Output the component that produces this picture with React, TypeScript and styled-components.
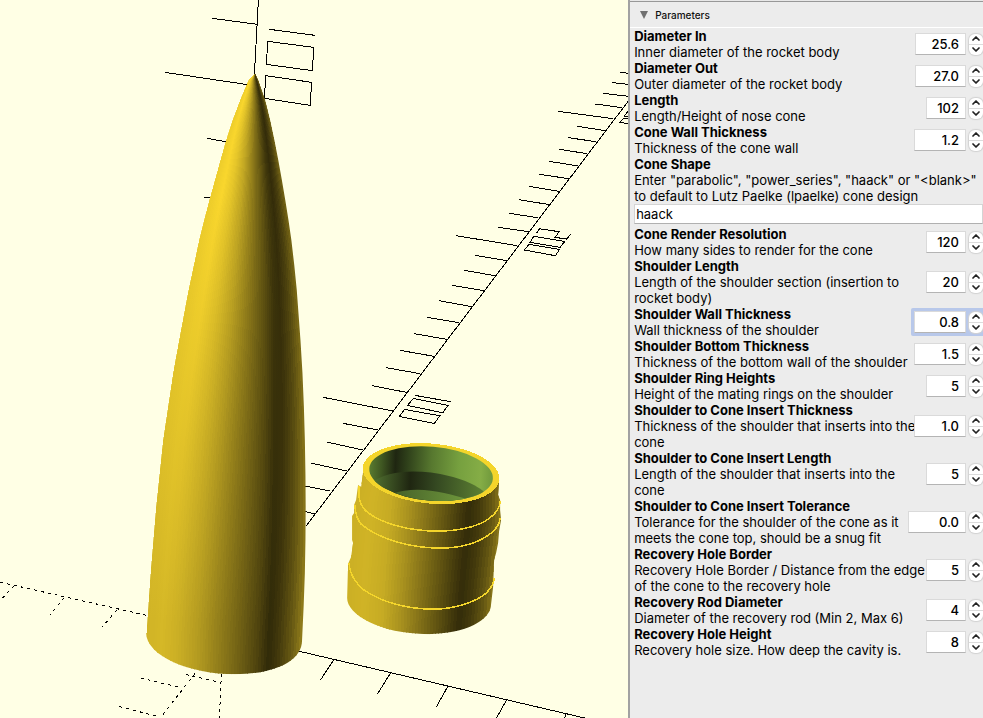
import React from 'react';
import styled, { createGlobalStyle } from 'styled-components';

const GlobalStyle = createGlobalStyle`
  * { box-sizing: border-box; }
  body { margin: 0; background: #ffffe5; color: #000; font-family: Inter, "Liberation Sans", sans-serif; }
`;

const Window = styled.main`
  display: flex;
  min-height: 100vh;
  overflow: hidden;
`;

const Viewport = styled.section`
  flex: 1;
  min-width: 0;
  background: #ffffe5;
  display: flex;
`;

const Scene = styled.svg`
  display: block;
  width: 100%;
  height: 100vh;
`;

const AxisLines = styled.g`
  fill: none;
  stroke: #000;
  stroke-width: 1px;
  shape-rendering: crispEdges;
  path { vector-effect: non-scaling-stroke; }
`;

const DashedLines = styled(AxisLines)`
  stroke-dasharray: 3 4;
`;

const Panel = styled.aside`
  width: calc(36% + 1px);
  flex: none;
  overflow: hidden;
  background: #ececec;
  border-left: 2px solid #a2a2a2;
  box-shadow: inset 0 1px #e8e8e8, inset 0 2px #989898;
`;

const Header = styled.button`
  display: flex;
  align-items: center;
  gap: 6px;
  width: 100%;
  height: 28px;
  padding: 3px 0 0 9px;
  border: 0;
  border-bottom: 1px solid #fff;
  background: transparent;
  color: #111;
  font: 500 10px/14px Inter, sans-serif;
  text-align: left;
`;

const Fields = styled.form`
  padding-left: 4px;
`;

const Row = styled.div`
  display: flex;
  align-items: center;
  justify-content: space-between;
`;

const Caption = styled.label`
  display: block;
  min-width: 0;
  font-size: 13px;
  line-height: 16px;
  white-space: nowrap;
`;

const Title = styled.strong`
  display: block;
  font-weight: 700;
`;

const Line = styled.span`
  display: block;
`;

const Spin = styled.div<{ $active?: boolean }>`
  display: flex;
  flex: none;
  align-items: center;
  gap: 3px;
  padding: 3px 0 3px 3px;
  margin: -2px 0;
  border-radius: 2px 0 0 2px;
  background: ${p => (p.$active ? '#b8c8ea' : 'transparent')};
`;

const Value = styled.input<{ $width: number }>`
  width: ${p => p.$width}px;
  height: 22px;
  padding: 0 6px 0 0;
  border: 1px solid #dadada;
  border-bottom-color: #b4b4b4;
  background: #fff;
  color: #000;
  text-align: right;
  font: 500 13px/18px Inter, sans-serif;
  outline: 0;
`;

const Stepper = styled.div`
  display: flex;
  flex-direction: column;
  width: 14px;
  height: 21px;
  border-radius: 6px;
  background: #fff;
  box-shadow: 0 0 1px 1px #d2d2d2;
`;

const Step = styled.button`
  display: flex;
  flex: 1;
  align-items: center;
  justify-content: center;
  padding: 0;
  border: 0;
  background: transparent;
  & + & { border-top: 1px solid #dcdcdc; }
`;

const TextValue = styled.input`
  display: block;
  width: 100%;
  height: 20px;
  margin-bottom: 2px;
  padding: 0 1px;
  border: 1px solid #d4d4d4;
  border-bottom-color: #b0b0b0;
  background: #fff;
  color: #000;
  font: 400 13px/16px Inter, sans-serif;
  outline: 0;
`;

type Param = { title: string; lines: string[]; value: string; width?: number; active?: boolean };

const before: Param[] = [
  { title: 'Diameter In', lines: ['Inner diameter of the rocket body'], value: '25.6', width: 51 },
  { title: 'Diameter Out', lines: ['Outer diameter of the rocket body'], value: '27.0', width: 51 },
  { title: 'Length', lines: ['Length/Height of nose cone'], value: '102', width: 40 },
  { title: 'Cone Wall Thickness', lines: ['Thickness of the cone wall'], value: '1.2', width: 52 },
];

const after: Param[] = [
  { title: 'Cone Render Resolution', lines: ['How many sides to render for the cone'], value: '120', width: 40 },
  { title: 'Shoulder Length', lines: ['Length of the shoulder section (insertion to', 'rocket body)'], value: '20', width: 40 },
  { title: 'Shoulder Wall Thickness', lines: ['Wall thickness of the shoulder'], value: '0.8', width: 52, active: true },
  { title: 'Shoulder Bottom Thickness', lines: ['Thickness of the bottom wall of the shoulder'], value: '1.5', width: 52 },
  { title: 'Shoulder Ring Heights', lines: ['Height of the mating rings on the shoulder'], value: '5', width: 40 },
  { title: 'Shoulder to Cone Insert Thickness', lines: ['Thickness of the shoulder that inserts into the', 'cone'], value: '1.0', width: 52 },
  { title: 'Shoulder to Cone Insert Length', lines: ['Length of the shoulder that inserts into the', 'cone'], value: '5', width: 40 },
  { title: 'Shoulder to Cone Insert Tolerance', lines: ['Tolerance for the shoulder of the cone as it', 'meets the cone top, should be a snug fit'], value: '0.0', width: 58 },
  { title: 'Recovery Hole Border', lines: ['Recovery Hole Border / Distance from the edge', 'of the cone to the recovery hole'], value: '5', width: 40 },
  { title: 'Recovery Rod Diameter', lines: ['Diameter of the recovery rod (Min 2, Max 6)'], value: '4', width: 40 },
  { title: 'Recovery Hole Height', lines: ['Recovery hole size. How deep the cavity is.'], value: '8', width: 40 },
];

const Chevron = ({ up }: { up?: boolean }) => (
  <svg width="8" height="5" viewBox="0 0 8 5" fill="none" stroke="#222" strokeWidth="1.7" strokeLinecap="round" strokeLinejoin="round" aria-hidden="true">
    <path d={up ? 'M1 4 4 1 7 4' : 'M1 1 4 4 7 1'} />
  </svg>
);

function NumberField({ title, lines, value, width = 40, active }: Param) {
  const id = title.toLowerCase().replace(/ /g, '-');
  return (
    <Row>
      <Caption htmlFor={id}>
        <Title>{title}</Title>
        {lines.map(line => <Line key={line}>{line}</Line>)}
      </Caption>
      <Spin $active={active}>
        <Value id={id} type="text" inputMode="decimal" defaultValue={value} $width={width} />
        <Stepper>
          <Step type="button" aria-label={`Increase ${title}`}><Chevron up /></Step>
          <Step type="button" aria-label={`Decrease ${title}`}><Chevron /></Step>
        </Stepper>
      </Spin>
    </Row>
  );
}

type Stops = [number, number][];

function sample(stops: Stops, at: number) {
  if (at <= stops[0][0]) return stops[0][1];
  for (let i = 1; i < stops.length; i++) {
    const [x1, y1] = stops[i];
    const [x0, y0] = stops[i - 1];
    if (at <= x1) return y0 + ((y1 - y0) * (at - x0)) / (x1 - x0);
  }
  return stops[stops.length - 1][1];
}

const gold = (k: number) => `rgb(${Math.round(254 * k)},${Math.round(219 * k)},${Math.round(46 * k)})`;

const coneLeft: Stops = [[74, 254], [80, 248.5], [100, 240], [120, 232.5], [140, 226], [160, 220.3], [180, 214.8], [200, 209.2], [220, 204], [240, 199], [292, 188], [340, 179], [373, 173], [440, 163], [507, 156], [573, 150.5], [632, 146.5], [680, 146]];
const coneRight: Stops = [[74, 255], [80, 258], [100, 265], [120, 270], [140, 274.3], [160, 278.2], [180, 281.8], [200, 285.2], [220, 288.4], [240, 291.3], [265, 294.2], [290, 296.7], [340, 300.4], [373, 302.4], [406, 303.8], [440, 304.8], [475, 305.4], [507, 305.6], [540, 305.4], [573, 304.8], [606, 303.6], [640, 302], [680, 300]];
const coneTop: Stops = [[0, 0.93], [0.15, 0.98], [0.28, 0.9], [0.42, 0.76], [0.55, 0.58], [0.68, 0.4], [0.78, 0.25], [0.84, 0.2], [0.91, 0.28], [1, 0.46]];
const coneBase: Stops = [[0, 0.82], [0.1, 0.84], [0.2, 0.8], [0.34, 0.7], [0.46, 0.58], [0.6, 0.44], [0.72, 0.3], [0.79, 0.19], [0.85, 0.26], [0.93, 0.4], [1, 0.58]];

const bodyLeft: Stops = [[440, 362], [475, 361], [485, 357], [505, 353], [560, 348], [600, 346], [640, 345]];
const bodyRight: Stops = [[440, 501], [520, 501], [600, 493], [640, 490]];
const bodyTone: Stops = [[0, 0.8], [0.12, 0.82], [0.25, 0.78], [0.38, 0.66], [0.52, 0.5], [0.65, 0.35], [0.78, 0.2], [0.86, 0.27], [0.94, 0.4], [1, 0.56]];

type FacetProps = { id: string; left: Stops; right: Stops; top: Stops; base: Stops; from: number; to: number; count: number; step: number };

function Facets({ id, left, right, top, base, from, to, count, step }: FacetProps) {
  const rows: number[] = [];
  for (let y = from; y <= to; y += step) rows.push(y);
  const x = (y: number, t: number) => sample(left, y) + (sample(right, y) - sample(left, y)) * t;
  const strips = Array.from({ length: count }, (_, i) => i);
  return (
    <>
      <defs>
        {strips.map(i => (
          <linearGradient key={i} id={`${id}-${i}`} gradientUnits="userSpaceOnUse" x1="0" x2="0" y1={from} y2={to}>
            <stop offset="0.2" stopColor={gold(sample(top, (i + 0.5) / count))} />
            <stop offset="0.9" stopColor={gold(sample(base, (i + 0.5) / count))} />
          </linearGradient>
        ))}
      </defs>
      {strips.map(i => {
        const a = rows.map(y => `${x(y, i / count).toFixed(1)} ${y}`);
        const b = rows.map(y => `${(x(y, (i + 1) / count) + 0.6).toFixed(1)} ${y}`).reverse();
        return <path key={i} d={`M${a.join('L')}L${b.join('L')}Z`} fill={`url(#${id}-${i})`} />;
      })}
    </>
  );
}

const conePoints = [
  ...coneLeft.slice(0, -1).map(([y, x]) => `${x} ${y}`).reverse(),
  ...coneRight.slice(0, -1).map(([y, x]) => `${x} ${y}`),
];
const coneOutline = `M${conePoints.join('L')}C302 662 272 674 235 674C190 674 146 656 146 632Z`;

const bodyOutline = 'M363 472L361 487L358 485L356 500L354 505L354 513L352 516L352 540L353 543L351 557L348 564L347 598C347 614 379 634 428 634C466 634 491 620 491 604L493 587L494 560L496 553L498 543L499 531L501 520L500 510L500 500L498 495L499 480Z';

function ModelScene() {
  return (
    <Scene viewBox="0 0 628 718" preserveAspectRatio="xMinYMin slice" role="img" aria-label="Nose cone and shoulder model">
      <defs>
        <clipPath id="cone-clip"><path d={coneOutline} /></clipPath>
        <clipPath id="body-clip"><path d={bodyOutline} /></clipPath>
        <clipPath id="bore-clip"><ellipse cx="431" cy="473.5" rx="62" ry="27" transform="rotate(5 431 473.5)" /></clipPath>
        <linearGradient id="bore" gradientUnits="userSpaceOnUse" x1="369" x2="493" y1="470" y2="476">
          <stop offset="0" stopColor="#5a7c30" /><stop offset="0.1" stopColor="#3f5722" />
          <stop offset="0.21" stopColor="#1f2611" /><stop offset="0.3" stopColor="#2e3f1a" />
          <stop offset="0.5" stopColor="#57782f" /><stop offset="0.72" stopColor="#76a03f" />
          <stop offset="0.9" stopColor="#85ad46" /><stop offset="1" stopColor="#6f983c" />
        </linearGradient>
        <linearGradient id="bore-step" gradientUnits="userSpaceOnUse" x1="374" x2="486" y1="485" y2="490">
          <stop offset="0" stopColor="#507030" /><stop offset="0.32" stopColor="#1f2611" />
          <stop offset="0.55" stopColor="#344821" /><stop offset="1" stopColor="#5f8434" />
        </linearGradient>
        <linearGradient id="bore-floor" gradientUnits="userSpaceOnUse" x1="395" x2="470" y1="495" y2="500">
          <stop offset="0" stopColor="#476229" /><stop offset="1" stopColor="#719b3d" />
        </linearGradient>
      </defs>

      <AxisLines>
        <path d="M306 526L629 100" />
        <g transform="translate(500 50) scale(.33333)">
          <path d="M360 67L386 70M337 98L386 103M310 130L386 139M286 162L367 173M175 184L340 206M232 229L316 242M205 263L288 275M178 298L262 311M148 334L234 348M118 373L207 386M88 409L178 424M58 449L149 464M28 490L114 503" />
          <path d="M109 550L118 536L177 545L165 562L200 567L212 552M101 559L194 574L180 592L90 577ZM86 583L178 598L166 617L73 600ZM386 221L360 217L370 205L386 207M386 200L373 198L386 180" />
        </g>
        <g transform="translate(300 220) scale(.33333)">
          <path d="M595 22L686 35M469 47L652 77M526 106L620 122M493 151L586 167M457 196L553 212M418 242L516 260M382 292L478 308M343 341L442 358M301 391L403 409M259 443L361 461M217 497L320 517M70 532L280 573M130 610L235 630" />
          <path d="M345 526L453 545M340 535L444 556L428 578L322 556ZM313 568L419 587L403 610L298 589Z" />
        </g>
        <path d="M327 442L363 450M311 463L347 471M300 485L330 491M300 510L315 514" />
        <g transform="translate(140 0) scale(.33333)">
          <path d="M355 0L343 225M217 55L352 73M75 217L330 255M202 415L262 426M193 592H215M388 88L525 106M383 124L521 142L517 212L379 193ZM377 227L515 247L510 316L373 295Z" />
        </g>
        <path d="M290 649L585 718" />
        <g transform="translate(300 600) scale(.33333)">
          <path d="M101 179L61 240M271 219L232 282M443 259L409 320M619 300L589 354M798 341L794 354" />
        </g>
      </AxisLines>
      <DashedLines>
        <g transform="translate(0 560) scale(.33333)">
          <path d="M0 66L445 167M42 77L0 122M192 113L150 165M350 150L307 200M422 354L545 383M557 343L655 366M585 340L480 474M358 439L480 471M664 342L658 474" />
        </g>
      </DashedLines>

      <g clipPath="url(#cone-clip)" shapeRendering="crispEdges">
        <Facets id="cone" left={coneLeft} right={coneRight} top={coneTop} base={coneBase} from={74} to={680} count={58} step={6} />
      </g>

      <g clipPath="url(#body-clip)" shapeRendering="crispEdges">
        <Facets id="body" left={bodyLeft} right={bodyRight} top={bodyTone} base={bodyTone} from={440} to={640} count={50} step={20} />
      </g>
      <g fill="none" stroke="#f4d52b" strokeWidth="1.5" shapeRendering="crispEdges">
        <path d="M359 486C358 497 359 504 366 511C381 524 411 531 437 531C463 531 484 525 494 514C498 510 500 506 500 501" />
        <path d="M355 505C355 513 357 519 361 524C380 540 413 548 440 548C464 548 481 541 491 533C497 528 500 524 500 518" />
        <path d="M349 563C350 575 355 582 364 590C383 603 409 609 433 609C456 609 477 601 486 593C491 588 494 584 494 578" />
      </g>
      <ellipse cx="431" cy="473.5" rx="68.5" ry="30" transform="rotate(5 431 473.5)" fill="#f4d52b" shapeRendering="crispEdges" />
      <g clipPath="url(#bore-clip)">
        <path d="M360 440H500V510H360Z" fill="url(#bore)" />
        <path d="M366 487C382 471 408 470 431 472.500C456 476 477 484 486 494V510H366Z" fill="url(#bore-step)" />
        <path d="M392 494C407 488 427 489 444 493C453 495 461 497 470 500V510H392Z" fill="url(#bore-floor)" />
      </g>
    </Scene>
  );
}

export default function App() {
  return (
    <>
      <GlobalStyle />
      <Window>
        <Viewport><ModelScene /></Viewport>
        <Panel>
          <Header type="button" aria-expanded="true">
            <svg width="10" height="8" viewBox="0 0 10 8" aria-hidden="true"><path d="M1 0H9L5 8Z" fill="#707070" /></svg>
            Parameters
          </Header>
          <Fields>
            {before.map(p => <NumberField key={p.title} {...p} />)}
            <Caption htmlFor="cone-shape">
              <Title>Cone Shape</Title>
              <Line>Enter "parabolic", "power_series", "haack" or "&lt;blank&gt;"</Line>
              <Line>to default to Lutz Paelke (lpaelke) cone design</Line>
            </Caption>
            <TextValue id="cone-shape" type="text" defaultValue="haack" />
            {after.map(p => <NumberField key={p.title} {...p} />)}
          </Fields>
        </Panel>
      </Window>
    </>
  );
}
